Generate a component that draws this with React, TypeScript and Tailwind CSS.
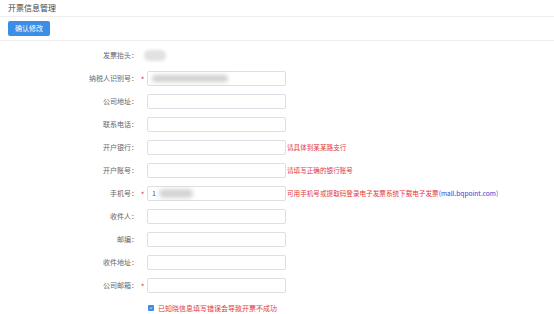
const rows = [
  { label: "纳税人识别号：", required: true, value: "taxid" },
  { label: "公司地址：" },
  { label: "联系电话：" },
  { label: "开户银行：", hint: "请具体到某某路支行" },
  { label: "开户账号：", hint: "请填写正确的银行账号" },
  { label: "手机号：", required: true, value: "phone", hint: "可用手机号或提取码登录电子发票系统下载电子发票", link: "(mall.bqpoint.com)" },
  { label: "收件人：" },
  { label: "邮编：" },
  { label: "收件地址：" },
  { label: "公司邮箱：", required: true },
];

type Row = { label: string; required?: boolean; value?: string; hint?: string; link?: string };

function FormRow({ row }: { row: Row }) {
  return (
    <div className="flex items-center h-[15px]">
      <div className="w-[138px] text-right text-[7px] text-[#666]">{row.label}</div>
      <div className="w-[9px] text-center text-[8px] text-[#e4393c] leading-none pt-[2px]">{row.required ? "*" : ""}</div>
      <div className="relative w-[139px] h-[15px] border border-[#dcdfe6] rounded-[2px] bg-white flex items-center px-[4px]">
        {row.value === "taxid" && <div className="w-[76px] h-[7px] bg-[#cfcfcf] rounded-sm blur-[2px]" />}
        {row.value === "phone" && (
          <>
            <span className="text-[7px] text-[#555]">1</span>
            <div className="ml-[3px] w-[34px] h-[9px] bg-[#d4d4d4] rounded-full blur-[2px]" />
          </>
        )}
      </div>
      {row.hint && (
        <div className="ml-[1px] text-[6.6px] text-[#e4393c] whitespace-nowrap">
          {row.hint}
          {row.link && <span className="text-[#3b3bd0]">{row.link}</span>}
        </div>
      )}
    </div>
  );
}

export default function App() {
  return (
    <div className="w-[554px] h-[314px] bg-white overflow-hidden" style={{ fontFamily: '"Noto Sans CJK SC", "Liberation Sans", sans-serif' }}>
      <div className="h-[17px] border-b border-[#eee] flex items-center px-[8px]">
        <span className="text-[8px] text-[#444]">开票信息管理</span>
      </div>
      <div className="px-[8px] pt-[4px] pb-[4px] border-b border-[#eee]">
        <button className="w-[42px] h-[15px] bg-[#3a8ee6] text-white text-[7px] rounded-[2px] flex items-center justify-center">
          确认修改
        </button>
      </div>
      <div className="flex flex-col gap-[8px] pt-[7px]">
        {/* invoice header */}
        <div className="flex items-center h-[15px]">
          <div className="w-[138px] text-right text-[7px] text-[#666]">发票抬头：</div>
          <div className="ml-[6px] w-[22px] h-[11px] rounded-full bg-[#e2e2e2] blur-[1.5px]" />
        </div>
        {rows.map((row, i) => (
          <FormRow key={i} row={row} />
        ))}
        <div className="flex items-center h-[14px] pl-[148px]">
          <div className="w-[6px] h-[6px] bg-[#3a8ee6] rounded-[1px] flex items-center justify-center">
            <svg width="4" height="4" viewBox="0 0 10 10">
              <path d="M2 5 L4.2 7.2 L8 3" stroke="white" strokeWidth="1.8" fill="none" />
            </svg>
          </div>
          <span className="ml-[4px] text-[7px] text-[#e4393c]">已知晓信息填写错误会导致开票不成功</span>
        </div>
      </div>
    </div>
  );
}
